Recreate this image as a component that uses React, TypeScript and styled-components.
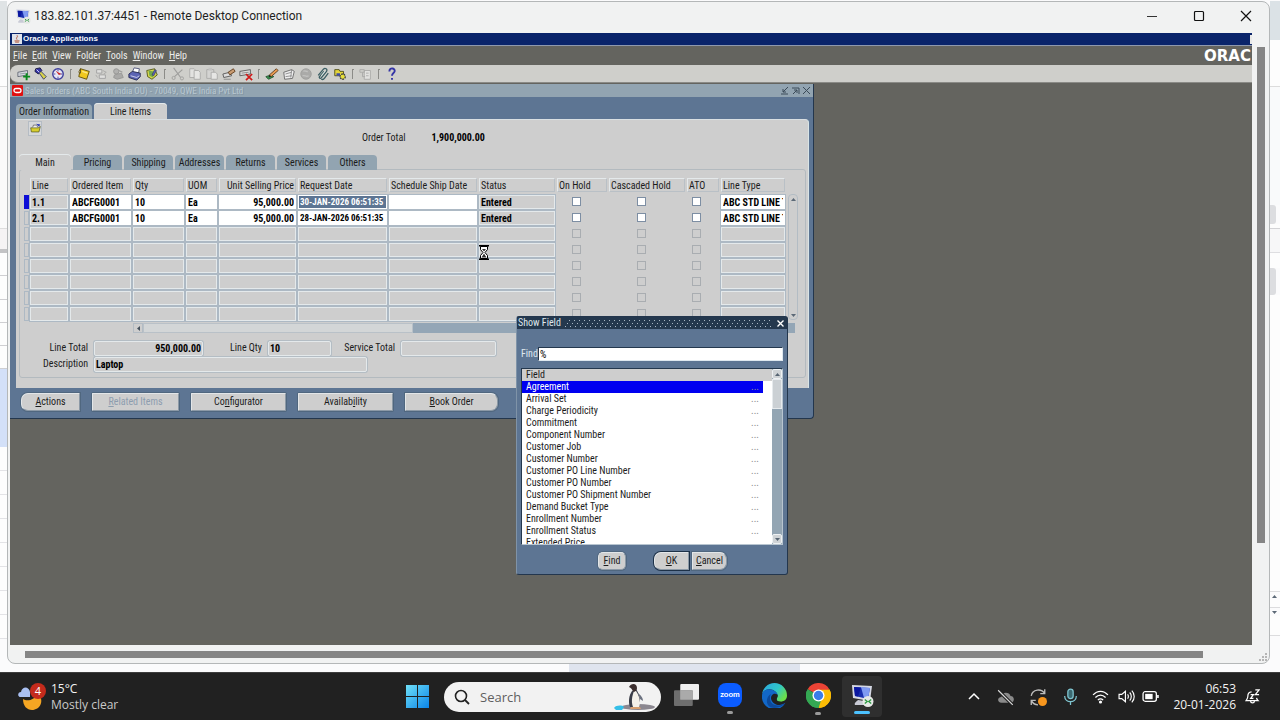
import React from "react";
import styled, { createGlobalStyle, css } from "styled-components";

const formsFont = `"Roboto Condensed", "Open Sans Condensed", "Liberation Sans", Arial, sans-serif`;
const shellFont = `"Open Sans", "Noto Sans", sans-serif`;

const colour = {
  canvas: "#64645f",
  face: "#cecece",
  frame: "#5d7593",
  tab: "#92a4b1",
  line: "#adb9c4",
  light: "#e4e9eb",
  ink: "#1c1c1c",
};

const GlobalStyle = createGlobalStyle`
  * { box-sizing: border-box; }
  body { margin: 0; background: #fbfbfc; font-family: ${shellFont}; }
  button, input { font: inherit; color: inherit; }
  button { padding: 0; border: 0; background: none; }
  input { margin: 0; border-radius: 0; }
  svg { display: block; }
`;

/* ---------- desktop ---------- */

const Screen = styled.div`
  min-height: 100vh;
  display: flex;
  flex-direction: column;
`;

const Desktop = styled.main`
  flex: 1;
  display: grid;
  grid-template-columns: 7px minmax(0, 1fr) 10px;
  grid-template-rows: 1fr 8px;
  padding-top: 1px;
  background: #fbfbfc;
`;

const Strip = styled.div`
  display: flex;
  flex-direction: column;
  overflow: hidden;
`;

const StripPart = styled.div<{ $h: number; $bg?: string; $line?: string }>`
  height: ${(p) => p.$h}px;
  background: ${(p) => p.$bg ?? "#fdfdfd"};
  border-bottom: 1px solid ${(p) => p.$line ?? "transparent"};
`;

const StripThumb = styled.div<{ $h: number }>`
  width: 6px;
  height: ${(p) => p.$h}px;
  border-radius: 0 3px 3px 0;
  background: #dcdde0;
`;

const Under = styled.div`
  grid-column: 1 / -1;
  display: flex;
  justify-content: center;
  padding-left: 88px;
`;

const UnderTint = styled.div`
  width: 231px;
  background: #dfe4ee;
`;

/* ---------- remote desktop window ---------- */

const Rdp = styled.section`
  display: flex;
  flex-direction: column;
  border: 1px solid #b4b7b8;
  border-radius: 8px;
  background: #f1f2f2;
  overflow: hidden;
`;

const RdpTitle = styled.header`
  height: 31px;
  padding: 0 15px 4px 7px;
  display: flex;
  align-items: center;
  gap: 3px;
  line-height: 16px;
  color: #1f1f1f;
`;

const RdpName = styled.h1`
  flex: 1;
  margin: 0;
  font-family: Roboto, sans-serif;
  font-size: 12px;
  font-weight: 400;
`;

const CaptionButtons = styled.div`
  display: flex;
  gap: 31px;
`;

const CaptionButton = styled.button`
  width: 16px;
  height: 16px;
  display: grid;
  place-items: center;
`;

const RdpBody = styled.div`
  flex: 1;
  display: grid;
  grid-template-columns: minmax(0, 1fr) 17px;
  grid-template-rows: minmax(0, 1fr) 18px;
  padding-left: 2px;
`;

const VTrack = styled.div`
  padding: 14px 0 0 5px;
`;

const VThumb = styled.div`
  width: 8px;
  height: 83%;
  background: #858585;
`;

const HTrack = styled.div`
  padding: 6px 0 0 15px;
`;

const HThumb = styled.div`
  width: 96%;
  height: 7px;
  background: #858585;
`;

const Grip = styled.div`
  display: flex;
  align-items: flex-end;
  justify-content: flex-end;
  padding: 2px;
`;

/* ---------- oracle shell ---------- */

const Remote = styled.div`
  display: flex;
  flex-direction: column;
  background: ${colour.canvas};
  font-family: ${formsFont};
  font-size: 10px;
  line-height: 12px;
  color: ${colour.ink};
  overflow: hidden;
`;

const AppTitle = styled.div`
  height: 13px;
  padding-left: 2px;
  display: flex;
  align-items: center;
  gap: 1px;
  background: #0a246a;
  border-bottom: 1px solid #8f99ae;
  font-family: "Liberation Sans", Arial, sans-serif;
  font-size: 8px;
  font-weight: 700;
  line-height: 10px;
  color: #f4f6fb;
`;

const AppTitleText = styled.span`
  flex: 1;
`;

const AppTitleEnd = styled.span`
  width: 2px;
  height: 9px;
  background: #e8e8e8;
`;

const MenuBar = styled.nav`
  height: 19px;
  padding-left: 3px;
  display: flex;
  align-items: center;
  gap: 5px;
  color: #ececea;
`;

const MenuLink = styled.a`
  color: inherit;
  text-decoration: none;
`;

const OracleMark = styled.span`
  width: 48px;
  margin-left: auto;
  overflow: hidden;
  font-family: "DejaVu Sans", sans-serif;
  font-size: 15px;
  font-weight: 700;
  line-height: 16px;
  color: #fff;
`;

const ToolBar = styled.div`
  height: 18px;
  padding-left: 5px;
  display: flex;
  align-items: center;
  background: #cfcfcb;
  border-bottom: 1px solid #8a8a86;
  border-radius: 8px 0 0 8px;
`;

const ToolButton = styled.button<{ $dim?: boolean }>`
  width: 17px;
  height: 16px;
  display: grid;
  place-items: center;
  opacity: ${(p) => (p.$dim ? 0.55 : 1)};
`;

const ToolSep = styled.span`
  width: 2px;
  height: 10px;
  margin: 0 3px 0 4px;
  border-left: 1px solid #8c8c88;
  border-top: 1px solid #8c8c88;
`;

const Canvas = styled.div`
  position: relative;
  flex: 1;
  min-height: 500px;
`;

/* ---------- sales orders window ---------- */

const SalesWindow = styled.section`
  position: absolute;
  left: 0;
  top: 1px;
  width: 804px;
  background: ${colour.frame};
  border-right: 1px solid #23364d;
  border-bottom: 1px solid #23364d;
  border-radius: 0 0 4px 0;
`;

const SalesTitle = styled.header`
  height: 13px;
  padding: 0 2px;
  display: flex;
  align-items: center;
  gap: 2px;
  background: ${colour.tab};
  color: #b9c8d2;
`;

const SalesName = styled.h2`
  flex: 1;
  margin: 0;
  font-size: 9px;
  font-weight: 400;
  line-height: 12px;
  text-shadow: 1px 1px 0 #8496a4;
`;

const TinyButton = styled.button`
  width: 9px;
  height: 9px;
`;

const Tabs = styled.div<{ $inner?: boolean }>`
  display: flex;
  align-items: flex-end;
  gap: 2px;
  ${(p) =>
    p.$inner
      ? css`
          height: 16px;
          margin-bottom: -1px;
          position: relative;
        `
      : css`
          height: 22px;
          padding-left: 6px;
        `}
`;

const Tab = styled.button<{ $w: number; $on?: boolean }>`
  width: ${(p) => p.$w}px;
  height: 15px;
  border-radius: 4px 4px 0 0;
  background: ${(p) => (p.$on ? colour.face : colour.tab)};
  line-height: 15px;
  white-space: nowrap;
  ${(p) =>
    p.$on &&
    css`
      height: 16px;
      box-shadow: inset 0 1px 0 ${colour.light};
    `}
`;

const Panel = styled.div`
  margin: 0 4px 0 6px;
  padding: 0 2px 10px 3px;
  background: ${colour.face};
  border-top: 1px solid #d9dfe2;
  border-right: 1px solid #d9e4e6;
  border-radius: 0 4px 0 0;
`;

const PanelTop = styled.div`
  height: 34px;
  padding: 1px 0 0 9px;
  display: flex;
`;

const FolderButton = styled.button`
  width: 14px;
  height: 15px;
  display: grid;
  place-items: center;
  border: 1px solid #b5bcc4;
  background: #d6d8da;
`;

const OrderTotal = styled.div`
  margin-left: 320px;
  display: flex;
  align-items: center;
  gap: 26px;
`;

const Strong = styled.strong`
  font-weight: 700;
  color: #000;
`;

const Pane = styled.div`
  padding: 8px 0 5px 4px;
  border: 1px solid #b3babf;
  border-radius: 3px;
`;

const GridArea = styled.div`
  display: flex;
  gap: 1px;
`;

const Grid = styled.table`
  width: 763px;
  table-layout: fixed;
  border-collapse: collapse;
  td,
  th {
    padding: 0;
    height: 16px;
    text-align: left;
    font-weight: 400;
    vertical-align: middle;
  }
`;

const Head = styled.div<{ $right?: boolean }>`
  height: 14px;
  margin: 0 2px 2px 0;
  padding: 0 1px;
  border: 1px solid #b9c0c6;
  border-top-color: ${colour.light};
  border-left-color: ${colour.light};
  line-height: 14px;
  white-space: nowrap;
  overflow: hidden;
  text-align: ${(p) => (p.$right ? "right" : "left")};
`;

const Marker = styled.div<{ $on: boolean }>`
  width: 5px;
  height: 14px;
  border: 1px solid ${(p) => (p.$on ? "#0d0dd6" : colour.line)};
  background: ${(p) => (p.$on ? "#0d0dd6" : "transparent")};
`;

const Cell = styled.input<{ $tone: "white" | "grey"; $right?: boolean }>`
  display: block;
  width: calc(100% - 2px);
  height: 14px;
  padding: 0 1px;
  border: 1px solid ${(p) => (p.$tone === "white" ? "#fff" : colour.light)};
  background: ${(p) => (p.$tone === "white" ? "#fff" : colour.face)};
  box-shadow: 0 0 0 1px ${colour.line};
  font-weight: 700;
  line-height: 12px;
  color: #000;
  text-align: ${(p) => (p.$right ? "right" : "left")};
  &:focus {
    outline: none;
  }
`;

const DateCell = styled(Cell)`
  font-size: 9px;
`;

const PickedCell = styled(DateCell)`
  background: ${colour.frame};
  color: #fff;
`;

const Tick = styled.input`
  appearance: none;
  display: block;
  width: 9px;
  height: 9px;
  margin: 0 0 1px 15px;
  border: 1px solid #7d8ea3;
  background: #fff;
  &:disabled {
    border-color: #a9adb1;
    background: transparent;
  }
`;

const TickWide = styled(Tick)`
  margin-left: 28px;
`;

const TickNarrow = styled(Tick)`
  margin-left: 5px;
`;

const SideScroll = styled.div`
  width: 10px;
  margin: 16px 0 2px;
  display: flex;
  flex-direction: column;
  justify-content: space-between;
  border: 1px solid #b3bcc4;
  border-radius: 4px;
`;

const ArrowButton = styled.button`
  width: 8px;
  height: 8px;
  display: grid;
  place-items: center;
  color: #5c6977;
`;

const FootScroll = styled.div`
  height: 10px;
  margin: 1px 10px 7px 109px;
  display: flex;
  background: #94a6b6;
`;

const FootThumb = styled.div`
  width: 270px;
  border: 1px solid #b9c1c8;
  background: #d3d6d7;
`;

const FootArrow = styled.button`
  width: 10px;
  height: 10px;
  display: grid;
  place-items: center;
  background: ${colour.face};
  border: 1px solid #b3bcc4;
  color: #44505c;
`;

const FieldRow = styled.div`
  height: 16px;
  display: flex;
  align-items: center;
  margin-left: -4px;
`;

const FieldLabel = styled.label<{ $w: number }>`
  width: ${(p) => p.$w}px;
  padding-right: 6px;
  text-align: right;
  white-space: nowrap;
`;

const Field = styled.input<{ $w: number; $right?: boolean }>`
  width: ${(p) => p.$w}px;
  height: 15px;
  padding: 0 1px;
  border: 1px solid ${colour.light};
  border-radius: 2px;
  background: ${colour.face};
  box-shadow: 0 0 0 1px #b4bdc4;
  font-weight: 700;
  color: #000;
  text-align: ${(p) => (p.$right ? "right" : "left")};
`;

const ActionRow = styled.footer`
  padding: 5px 0 7px 11px;
  display: flex;
  gap: 12px;
`;

const Push = styled.button<{ $w: number; $round?: "left" | "right" | "both"; $strong?: boolean }>`
  width: ${(p) => p.$w}px;
  height: 18px;
  border: 1px solid #e3e6e8;
  border-right-color: #8c99a6;
  border-bottom-color: #8c99a6;
  border-radius: ${(p) =>
    p.$round === "both" ? "5px" : p.$round === "left" ? "7px 0 0 7px" : p.$round === "right" ? "0 7px 7px 0" : "1px"};
  background: ${colour.face};
  box-shadow: ${(p) => (p.$strong ? "0 0 0 1px #1d3148" : "0 0 0 1px #50677f")};
  line-height: 14px;
  white-space: nowrap;
  color: ${colour.ink};
  &:disabled {
    color: #8d9dae;
  }
`;

/* ---------- show field dialog ---------- */

const Dialog = styled.section`
  position: absolute;
  left: 506px;
  top: 233px;
  width: 272px;
  border: 1px solid #23364d;
  border-left-color: #7f93a8;
  border-radius: 3px;
  background: ${colour.frame};
`;

const DialogTitle = styled.header`
  height: 12px;
  padding: 0 2px 0 1px;
  display: flex;
  align-items: center;
  gap: 4px;
  background: #24384e;
  color: #dfe6ec;
`;

const Stipple = styled.span`
  flex: 1;
  height: 9px;
  overflow: hidden;
`;

const FindRow = styled.div`
  margin-top: 18px;
  padding: 0 4px;
  display: flex;
  align-items: center;
  color: #dfe8ef;
`;

const FindLabel = styled.label`
  width: 17px;
  white-space: nowrap;
`;

const FindBox = styled.input`
  flex: 1;
  min-width: 0;
  height: 14px;
  padding: 0 1px;
  border: 1px solid #24384e;
  border-right-color: #dfe8ef;
  border-bottom-color: #dfe8ef;
  background: #fff;
  color: #000;
`;

const ListFrame = styled.div`
  height: 177px;
  margin: 7px 4px 0;
  display: flex;
  border: 1px solid #24384e;
  border-right-color: #b8c5d0;
  border-bottom-color: #b8c5d0;
  background: #fff;
  overflow: hidden;
`;

const List = styled.table`
  flex: 1;
  align-self: flex-start;
  border-collapse: collapse;
  td,
  th {
    height: 12px;
    padding: 0 0 0 4px;
    font-weight: 400;
    text-align: left;
    line-height: 12px;
  }
`;

const ListHead = styled.tr`
  background: ${colour.face};
`;

const ListRow = styled.tr<{ $on: boolean }>`
  color: ${(p) => (p.$on ? "#fff" : colour.ink)};
  td:not(:last-child) {
    background: ${(p) => (p.$on ? "#0000f0" : "transparent")};
  }
`;

const More = styled.td`
  width: 16px;
  color: #8d8d8d;
`;

const Spare = styled.td`
  width: 9px;
`;

const ListScroll = styled.div`
  width: 10px;
  display: flex;
  flex-direction: column;
  background: #93a5b3;
`;

const ListArrow = styled.button`
  width: 10px;
  height: 10px;
  display: grid;
  place-items: center;
  border: 1px solid #eef1f3;
  border-radius: 2px;
  background: #cfd3d6;
  color: #566472;
`;

const ListThumb = styled.div`
  height: 30px;
  margin-bottom: auto;
  border: 1px solid #e6eaed;
  background: #cbd0d4;
`;

const DialogButtons = styled.footer`
  padding: 7px 0 4px 81px;
  display: flex;
`;

const Gap = styled.span<{ $w: number }>`
  width: ${(p) => p.$w}px;
`;

const Wait = styled.span`
  position: absolute;
  left: 469px;
  top: 162px;
`;

/* ---------- taskbar ---------- */

const Taskbar = styled.footer`
  height: 48px;
  padding: 0 20px 0 18px;
  display: grid;
  grid-template-columns: 1fr auto 1fr;
  align-items: center;
  background: #212121;
  border-top: 1px solid #3d3d3d;
  color: #f3f3f3;
  font-size: 12px;
  line-height: 16px;
`;

const Weather = styled.button`
  display: flex;
  align-items: center;
  gap: 4px;
  text-align: left;
`;

const Muted = styled.div`
  color: #c9c9c9;
`;

const Dock = styled.div`
  padding-left: 10px;
  display: flex;
  align-items: center;
`;

const SearchBox = styled.label`
  width: 217px;
  height: 30px;
  margin: 0 5px 0 15px;
  padding: 0 5px 0 10px;
  display: flex;
  align-items: center;
  gap: 10px;
  border-radius: 15px;
  background: #f2f2f2;
  color: #222;
  overflow: hidden;
`;

const SearchInput = styled.input`
  flex: 1;
  min-width: 0;
  padding: 0;
  border: 0;
  background: none;
  font-size: 13px;
  &::placeholder {
    color: #5f5f5f;
    opacity: 1;
  }
`;

const DockButton = styled.button<{ $on?: boolean }>`
  width: 40px;
  height: 41px;
  margin-right: 4px;
  padding-top: 7px;
  display: flex;
  flex-direction: column;
  align-items: center;
  gap: 4px;
  border-radius: 4px;
  background: ${(p) => (p.$on ? "#2f2f2f" : "transparent")};
  &:last-child {
    margin-right: 0;
  }
`;

const Running = styled.span<{ $on?: boolean }>`
  width: ${(p) => (p.$on ? 16 : 6)}px;
  height: 3px;
  border-radius: 2px;
  background: ${(p) => (p.$on ? "#4cc2ff" : "#9a9a9a")};
`;

const ZoomTile = styled.span`
  width: 24px;
  height: 24px;
  border-radius: 8px;
  background: #0b5cff;
  font-family: Lato, sans-serif;
  font-size: 8px;
  font-weight: 700;
  line-height: 22px;
  text-align: center;
  color: #fff;
`;

const Tray = styled.div`
  display: flex;
  justify-content: flex-end;
  align-items: center;
`;

const TrayButton = styled.button<{ $w: number }>`
  width: ${(p) => p.$w}px;
  height: 24px;
  display: grid;
  place-items: center;
`;

const Clock = styled.time`
  width: 74px;
  margin-right: 9px;
  text-align: right;
`;

/* ---------- drawings ---------- */

const Svg = ({ s = 14, children, box = 16 }: { s?: number; box?: number; children: React.ReactNode }) => (
  <svg width={s} height={s} viewBox={`0 0 ${box} ${box}`} fill="none" aria-hidden="true">
    {children}
  </svg>
);

const MonitorIcon = ({ size }: { size: number }) => (
  <Svg s={size} box={24}>
    <path d="M8 17l6 1 1 4H5c-1-2 1-3 3-5z" fill="#c9cbd6" />
    <path d="M2 2l20 1-2 15L3 15z" fill="#d5d8e4" />
    <path d="M4 4l16 1-2 11L5 13z" fill="#1a2fae" />
    <path d="M11 4l9 1-2 11-4-1z" fill="#7f9af2" />
    <path d="M4 4l7 .4L8 13.6 5 13z" fill="#0a17a0" />
    <circle cx="18" cy="18.500" r="5.500" fill="#e6e8e6" />
    <path d="M14.800 16.500l2.400 2-2.400 2M21.200 16.500l-2.400 2 2.400 2" stroke="#2f9a44" strokeWidth="1.400" />
  </Svg>
);

const tools: Record<string, React.ReactNode> = {
  New: (
    <>
      <path d="M1 6l11-2v5L1 11z" fill="#d8dbe0" stroke="#5d6470" />
      <path d="M3 8l7-1" stroke="#8c94a0" />
      <path d="M11 7v8M7 11h8" stroke="#0a8a1e" strokeWidth="2.200" />
    </>
  ),
  Find: (
    <>
      <path d="M2 2l5-1 2 3-4 4-4-3z" fill="#3636a8" stroke="#14143c" />
      <path d="M6 7l2-2 6 6-3 3z" fill="#d9d24a" stroke="#333a66" />
      <path d="M3 3l3 3" stroke="#e8e8ff" />
    </>
  ),
  Navigator: (
    <>
      <circle cx="8" cy="8" r="6" fill="#e6e6f5" stroke="#3f3f9c" strokeWidth="1.600" />
      <path d="M5 4l4 5 3-1-4-2z" fill="#c22" />
      <path d="M8 3v2M8 11v2M3 8h2M11 8h2" stroke="#3f3f9c" />
    </>
  ),
  Save: (
    <>
      <path d="M4 2l10 3-3 9L2 11z" fill="#f0c81e" stroke="#5a4a08" />
      <path d="M4 2L2 6l2 1z" fill="#fff" stroke="#5a4a08" />
      <path d="M6 5l6 2" stroke="#fbe88a" strokeWidth="1.500" />
    </>
  ),
  "Next Step": (
    <>
      <path d="M3 3h6v4H3zM6 9h7v4H6z" fill="#eee" stroke="#77777a" />
      <path d="M10 4l4 2-3 2M2 9l2 3" stroke="#888" />
    </>
  ),
  "Switch Responsibility": (
    <>
      <circle cx="6" cy="5" r="3" fill="#999" stroke="#666" />
      <path d="M4 9l8-2 2 5-7 2-4-2z" fill="#8c8c8c" stroke="#666" />
      <path d="M9 4l4 2" stroke="#777" strokeWidth="1.500" />
    </>
  ),
  Print: (
    <>
      <path d="M5 6l2-5 6 1-1 5z" fill="#fff" stroke="#4a4f78" />
      <path d="M1 8l4-3 9 2v4l-4 4-9-3z" fill="#5c64b4" stroke="#24284e" />
      <path d="M3 10l7 2 3-2" stroke="#d8daf2" />
    </>
  ),
  "Close Form": (
    <>
      <path d="M2 4l9-2 3 7-6 5-5-3z" fill="#d6d84c" stroke="#4f5318" />
      <path d="M4 4l6 1-1 7-4-2z" fill="#72a84c" />
      <path d="M8 9l3-6 2 1-3 6z" fill="#5b63bd" stroke="#20244a" strokeWidth=".6" />
    </>
  ),
  Cut: (
    <>
      <path d="M3 1l8 11M13 3L4 11" stroke="#777" strokeWidth="1.300" />
      <circle cx="3" cy="12.500" r="1.800" stroke="#777" />
      <circle cx="12.500" cy="13" r="1.800" stroke="#777" />
    </>
  ),
  Copy: (
    <>
      <path d="M2 2h5l2 2v8H2z" fill="#f2f2f2" stroke="#8b8b8b" />
      <path d="M7 4h5l2 2v8H7z" fill="#fafafa" stroke="#8b8b8b" />
    </>
  ),
  Paste: (
    <>
      <path d="M2 3h8v10H2z" fill="#d9d9d9" stroke="#8b8b8b" />
      <path d="M4 1h4v3H4z" fill="#bbb" />
      <path d="M7 6h5l2 2v6H7z" fill="#fafafa" stroke="#8b8b8b" />
    </>
  ),
  "Clear Record": (
    <>
      <path d="M1 8l8-2 2 4-9 2z" fill="#dcdcdc" stroke="#555" />
      <path d="M7 6l6-4 2 3-6 4z" fill="#c99c72" stroke="#5b3a1c" />
      <path d="M2 14h8" stroke="#888" />
    </>
  ),
  Delete: (
    <>
      <path d="M1 5l12-2v5L1 10z" fill="#dcdcdc" stroke="#555" />
      <path d="M3 7l8-1" stroke="#888" />
      <path d="M8 8l7 7M15 8l-7 7" stroke="#d01818" strokeWidth="2" />
    </>
  ),
  "Edit Field": (
    <>
      <path d="M1 11l6-2 3 2-6 3z" fill="#3b9a52" stroke="#1f4e2b" />
      <path d="M5 9l8-7 2 2-8 7z" fill="#e89a50" stroke="#5b3a1c" />
      <path d="M5 9l2 2-3 1z" fill="#222" />
    </>
  ),
  Zoom: (
    <>
      <path d="M2 6l9-3 3 2-2 8-9 1z" fill="#eee" stroke="#666" />
      <path d="M4 8l7-2M4 11l7-1M11 3l-1 9" stroke="#888" />
    </>
  ),
  Translations: (
    <>
      <circle cx="8" cy="8" r="6" fill="#8d8d8d" stroke="#777" />
      <path d="M5 5c2-2 3 1 5 0M4 10c3-1 4 2 7 0" stroke="#b8b8b8" strokeWidth="1.500" />
    </>
  ),
  Attachments: (
    <>
      <path d="M2.500 9.500l6-7c2-2 5 0 3.500 2.500l-6 7.500c-1 1.200-2.800 0-2-1.500l5-6M6 14c2 1 3 0 4-1.500l4-5.500" stroke="#3c5f64" strokeWidth="1.500" />
      <path d="M6 10l4-5" stroke="#e8f6f4" />
    </>
  ),
  "Folder Tools": (
    <>
      <path d="M2 3h5l1 2h4v5H2z" fill="#e3d53c" stroke="#4d4b12" />
      <circle cx="11" cy="11" r="3" fill="#e8e03a" stroke="#33364a" strokeDasharray="2 1" strokeWidth="1.500" />
      <path d="M4 7h4v3H4z" fill="#3e4ba8" />
    </>
  ),
  Workbench: (
    <>
      <path d="M6 4h7v10H6z" fill="#f2f2f2" stroke="#8a8a8a" />
      <path d="M1 3h5v3H1zM4 6v5h3M8 7h3M8 10h3" stroke="#8a8a8a" />
    </>
  ),
  Help: (
    <>
      <path d="M5 5c0-5 7-4 6 0-.4 2-3 2-3 5" stroke="#3434a6" strokeWidth="2.200" />
      <path d="M8 12.500v2.200" stroke="#3434a6" strokeWidth="2.200" />
    </>
  ),
};

const toolGroups: string[][] = [
  ["New", "Find", "Navigator"],
  ["Save", "Next Step", "Switch Responsibility", "Print", "Close Form"],
  ["Cut", "Copy", "Paste", "Clear Record", "Delete"],
  ["Edit Field", "Zoom", "Translations", "Attachments", "Folder Tools"],
  ["Workbench"],
  ["Help"],
];

const dimmed = new Set(["Next Step", "Switch Responsibility", "Cut", "Copy", "Paste", "Translations", "Workbench"]);

const Arrow = ({ d }: { d: "up" | "down" | "left" }) => (
  <svg width="5" height="5" viewBox="0 0 5 5" aria-hidden="true">
    <path
      d={d === "up" ? "M0 4l2.500-3L5 4z" : d === "down" ? "M0 1l2.500 3L5 1z" : "M4 0L1 2.500 4 5z"}
      fill="currentColor"
    />
  </svg>
);

const Dots = () => (
  <svg width="100%" height="9" aria-hidden="true">
    <defs>
      <pattern id="dots" width="5" height="9" patternUnits="userSpaceOnUse">
        <path d="M4 1h1v1H4zM2 4h1v1H2zM0 7h1v1H0z" fill="#a9b7c4" />
      </pattern>
    </defs>
    <rect width="100%" height="9" fill="url(#dots)" />
  </svg>
);

const Penguin = () => (
  <svg width="42" height="28" viewBox="0 0 42 28" aria-hidden="true">
    <ellipse cx="24" cy="24" rx="17" ry="3" fill="#8b8790" />
    <path d="M0 25c2-3 8-3 10-1l-2 3H2z" fill="#35bfe8" />
    <path d="M18 8c-3 4-4 11-2 16h6l4-6c0-5-2-9-4-12z" fill="#3a3d48" />
    <path d="M20 8c-2 5-3 11-1 16h6c2-5 0-12-3-16z" fill="#f4f1ea" />
    <path d="M15 4c2-4 8-4 8 1 0 2-1 3-3 4-2-1-1-3-5-5z" fill="#3c2f2f" />
    <path d="M24 10c2 2 5 4 5 8l-3-2z" fill="#6c7280" />
    <path d="M17 24h9l1 2H16z" fill="#d8a070" />
  </svg>
);

const EdgeIcon = () => (
  <Svg s={25} box={24}>
    <defs>
      <linearGradient id="edgeTop" x1="0" y1="0" x2="1" y2=".6">
        <stop offset="0" stopColor="#2aa6e0" />
        <stop offset=".6" stopColor="#30c6c8" />
        <stop offset="1" stopColor="#6be04a" />
      </linearGradient>
    </defs>
    <path d="M0 12a12 12 0 0124 0c0 4-3 6-6 6s-4-1.500-4-2.500 1-1.500 1-3.500c0-3-4-6-8-6-4 0-7 3-7 6z" fill="url(#edgeTop)" />
    <path d="M0 12c0-4 3-6 7-6 4 0 8 3 8 6-1-1.500-3-2-4-1.500-4 2-3 9 4 10.500 3 .5 5-.5 7.500-2A12 12 0 010 12z" fill="#1268c8" />
    <path d="M8 23.300C3 20 4 13 8.500 10.500 6 16 9 22 16 21.500c2.500 0 4-1 6.500-2.500-3 4-9 6-14.500 4.300z" fill="#0c4a9c" />
    <path d="M15 12c0 2-1 2.500-1 3.500s1 2.500 4 2.500c1.500 0 3-.5 4.200-1.500-2 3-7.200 4.500-10.200 1.500-2-2.200-1.500-5 0-7.300 1.500-.3 2.500.3 3 1.300z" fill="#212121" />
  </Svg>
);

const ChromeIcon = () => (
  <Svg s={25} box={24}>
    <path d="M12 12L1.600 6A12 12 0 0122.400 6z" fill="#ea4335" />
    <path d="M12 12l10.400-6A12 12 0 0112 24z" fill="#fbbc05" />
    <path d="M12 12v12A12 12 0 011.600 6z" fill="#34a853" />
    <path d="M12 6.500h10.600A12 12 0 0112 24l5-9z" fill="#fbbc05" />
    <path d="M12 24A12 12 0 011.600 6l5.600 8.500 7 3z" fill="#34a853" />
    <circle cx="12" cy="12" r="5.800" fill="#fff" />
    <circle cx="12" cy="12" r="4.500" fill="#3b7de9" />
  </Svg>
);

/* ---------- data ---------- */

const columns = [
  { name: "Line", w: 40 },
  { name: "Ordered Item", w: 63 },
  { name: "Qty", w: 53 },
  { name: "UOM", w: 33 },
  { name: "Unit Selling Price", w: 79, right: true },
  { name: "Request Date", w: 91 },
  { name: "Schedule Ship Date", w: 90 },
  { name: "Status", w: 78 },
  { name: "On Hold", w: 52 },
  { name: "Cascaded Hold", w: 78 },
  { name: "ATO", w: 34 },
  { name: "Line Type", w: 66 },
];

const lines = [
  ["1.1", "ABCFG0001", "10", "Ea", "95,000.00", "30-JAN-2026 06:51:35", "", "Entered", "", "", "", "ABC STD LINE TYPE"],
  ["2.1", "ABCFG0001", "10", "Ea", "95,000.00", "28-JAN-2026 06:51:35", "", "Entered", "", "", "", "ABC STD LINE TYPE"],
];

const fields = [
  "Agreement",
  "Arrival Set",
  "Charge Periodicity",
  "Commitment",
  "Component Number",
  "Customer Job",
  "Customer Number",
  "Customer PO Line Number",
  "Customer PO Number",
  "Customer PO Shipment Number",
  "Demand Bucket Type",
  "Enrollment Number",
  "Enrollment Status",
  "Extended Price",
];

const ticks: Record<string, typeof Tick> = { "On Hold": Tick, "Cascaded Hold": TickWide, ATO: TickNarrow };

const GridCell = ({ row, col }: { row: number; col: number }) => {
  const column = columns[col];
  const label = `${column.name}, row ${row + 1}`;
  const filled = row < lines.length;
  const Box = ticks[column.name];
  if (Box) return <Box type="checkbox" aria-label={label} disabled={!filled} />;
  const grey = !filled || column.name === "Line" || column.name === "Status";
  const isDate = column.name === "Request Date";
  const Control = isDate ? (row === 0 ? PickedCell : DateCell) : Cell;
  return (
    <Control
      aria-label={label}
      defaultValue={filled ? lines[row][col] : ""}
      $tone={grey ? "grey" : "white"}
      $right={column.right}
    />
  );
};

/* ---------- page ---------- */

const SalesOrders = () => (
  <SalesWindow>
    <SalesTitle>
      <svg width="11" height="11" viewBox="0 0 11 11" aria-hidden="true">
        <rect width="11" height="11" rx="1" fill="#e01010" />
        <rect x="2" y="3.500" width="7" height="4" rx="2" fill="none" stroke="#fff" strokeWidth="1.300" />
      </svg>
      <SalesName>Sales Orders (ABC South India OU) - 70049, QWE India Pvt Ltd</SalesName>
      {["M8 1L3 6M3 3v3h3M1 8h7", "M1 2h7v6M6 4L2 8M3 4h3v3", "M1 1l7 7M8 1L1 8"].map((d, i) => (
        <TinyButton key={d} aria-label={["Minimise", "Maximise", "Close"][i]}>
          <Svg s={9} box={9}>
            <path d={d} stroke="#3b4a58" />
          </Svg>
        </TinyButton>
      ))}
    </SalesTitle>
    <Tabs>
      <Tab $w={76}>Order Information</Tab>
      <Tab $w={73} $on>
        Line Items
      </Tab>
    </Tabs>
    <Panel>
      <PanelTop>
        <FolderButton aria-label="Open folder">
          <Svg s={11}>
            <path d="M1 7h11l3-2-2 8H2z" fill="#d8cf2e" stroke="#4f5120" />
            <path d="M4 6l1-3h5l1 3" fill="#eee" stroke="#555" />
            <path d="M9 1l6 1-2 3z" fill="#2433b8" />
          </Svg>
        </FolderButton>
        <OrderTotal>
          <span>Order Total</span>
          <Strong>1,900,000.00</Strong>
        </OrderTotal>
      </PanelTop>
      <Tabs $inner>
        {["Main", "Pricing", "Shipping", "Addresses", "Returns", "Services", "Others"].map((name, i) => (
          <Tab key={name} $w={i === 0 ? 52 : 49} $on={i === 0}>
            {name}
          </Tab>
        ))}
      </Tabs>
      <Pane>
        <GridArea>
          <Grid>
            <colgroup>
              <col style={{ width: 6 }} />
              {columns.map((c) => (
                <col key={c.name} style={{ width: c.w }} />
              ))}
            </colgroup>
            <thead>
              <tr>
                <td />
                {columns.map((c) => (
                  <th key={c.name} scope="col">
                    <Head $right={c.right}>{c.name}</Head>
                  </th>
                ))}
              </tr>
            </thead>
            <tbody>
              {Array.from({ length: 8 }, (_, row) => (
                <tr key={row}>
                  <td>
                    <Marker $on={row === 0} />
                  </td>
                  {columns.map((c, col) => (
                    <td key={c.name}>
                      <GridCell row={row} col={col} />
                    </td>
                  ))}
                </tr>
              ))}
            </tbody>
          </Grid>
          <SideScroll>
            <ArrowButton aria-label="Scroll lines up">
              <Arrow d="up" />
            </ArrowButton>
            <ArrowButton aria-label="Scroll lines down">
              <Arrow d="down" />
            </ArrowButton>
          </SideScroll>
        </GridArea>
        <FootScroll>
          <FootArrow aria-label="Scroll columns left">
            <Arrow d="left" />
          </FootArrow>
          <FootThumb />
        </FootScroll>
        <FieldRow>
          <FieldLabel $w={74} htmlFor="line-total">
            Line Total
          </FieldLabel>
          <Field id="line-total" $w={109} $right defaultValue="950,000.00" />
          <FieldLabel $w={65} htmlFor="line-qty">
            Line Qty
          </FieldLabel>
          <Field id="line-qty" $w={63} defaultValue="10" />
          <FieldLabel $w={70} htmlFor="service-total">
            Service Total
          </FieldLabel>
          <Field id="service-total" $w={95} />
        </FieldRow>
        <FieldRow>
          <FieldLabel $w={74} htmlFor="description">
            Description
          </FieldLabel>
          <Field id="description" $w={273} defaultValue="Laptop" />
        </FieldRow>
      </Pane>
    </Panel>
    <ActionRow>
      <Push $w={59} $round="left">
        <u>A</u>ctions
      </Push>
      <Push $w={87} disabled>
        <u>R</u>elated Items
      </Push>
      <Push $w={95}>
        Co<u>n</u>figurator
      </Push>
      <Push $w={95}>
        Availab<u>i</u>lity
      </Push>
      <Push $w={93} $round="right">
        <u>B</u>ook Order
      </Push>
    </ActionRow>
  </SalesWindow>
);

const ShowField = () => (
  <Dialog role="dialog" aria-label="Show Field">
    <DialogTitle>
      <span>Show Field</span>
      <Stipple>
        <Dots />
      </Stipple>
      <TinyButton aria-label="Close dialog">
        <Svg s={9} box={9}>
          <path d="M1.500 1.500l6 6M7.500 1.500l-6 6" stroke="#fff" strokeWidth="1.400" />
        </Svg>
      </TinyButton>
    </DialogTitle>
    <FindRow>
      <FindLabel htmlFor="find">Find</FindLabel>
      <FindBox id="find" defaultValue="%" />
    </FindRow>
    <ListFrame>
      <List>
        <thead>
          <ListHead>
            <th scope="col" colSpan={3}>
              Field
            </th>
          </ListHead>
        </thead>
        <tbody>
          {fields.map((name, i) => (
            <ListRow key={name} $on={i === 0}>
              <td>{name}</td>
              <More>{i < fields.length - 1 ? "..." : ""}</More>
              <Spare />
            </ListRow>
          ))}
        </tbody>
      </List>
      <ListScroll>
        <ListArrow aria-label="Scroll fields up">
          <Arrow d="up" />
        </ListArrow>
        <ListThumb />
        <ListArrow aria-label="Scroll fields down">
          <Arrow d="down" />
        </ListArrow>
      </ListScroll>
    </ListFrame>
    <DialogButtons>
      <Push $w={28} $round="both">
        <u>F</u>ind
      </Push>
      <Gap $w={28} />
      <Push $w={35} $round="left" $strong>
        <u>O</u>K
      </Push>
      <Gap $w={3} />
      <Push $w={35} $round="right">
        <u>C</u>ancel
      </Push>
    </DialogButtons>
  </Dialog>
);

export default function App() {
  return (
    <Screen>
      <GlobalStyle />
      <Desktop>
        <Strip>
          <StripPart $h={39} $bg="#dfe3e5" />
          <StripPart $h={47} $bg="#fdfdfd" $line="#dcdcdc" />
          <StripPart $h={142} $bg="#fafafa" $line="#dedede" />
          <StripPart $h={20} $bg="#f5f3f4" />
          <StripPart $h={4} $bg="#c3c3c5" />
          <StripPart $h={23} $line="#cfcfd2" />
          <StripPart $h={24} $line="#cfcfd2" />
          <StripPart $h={23} $line="#cfcfd2" />
          <StripPart $h={23} $line="#cfcfd2" />
          <StripPart $h={23} $line="#cfcfd2" />
          <StripPart $h={78} $bg="#d3e0f8" />
          {[0, 1, 2, 3, 4, 5, 6, 7].map((n) => (
            <StripPart key={n} $h={24} $line="#e3e3e6" />
          ))}
        </Strip>
        <Rdp>
          <RdpTitle>
            <MonitorIcon size={16} />
            <RdpName>183.82.101.37:4451 - Remote Desktop Connection</RdpName>
            <CaptionButtons>
              <CaptionButton aria-label="Minimise window">
                <Svg s={12} box={12}>
                  <path d="M1 6.500h10" stroke="#333" />
                </Svg>
              </CaptionButton>
              <CaptionButton aria-label="Maximise window">
                <Svg s={12} box={12}>
                  <rect x="1.500" y="1.500" width="9" height="9" rx="1" stroke="#111" strokeWidth="1.200" />
                </Svg>
              </CaptionButton>
              <CaptionButton aria-label="Close window">
                <Svg s={12} box={12}>
                  <path d="M1 1l10 10M11 1L1 11" stroke="#111" strokeWidth="1.200" />
                </Svg>
              </CaptionButton>
            </CaptionButtons>
          </RdpTitle>
          <RdpBody>
            <Remote>
              <AppTitle>
                <Svg s={10}>
                  <rect width="16" height="16" fill="#dfe3ea" />
                  <path d="M8 2c3 2-3 4 0 7M4 11h8M5 13h6" stroke="#b4573a" strokeWidth="1.500" />
                </Svg>
                <AppTitleText>Oracle Applications</AppTitleText>
                <AppTitleEnd />
              </AppTitle>
              <MenuBar>
                {[
                  ["", "F", "ile"],
                  ["", "E", "dit"],
                  ["", "V", "iew"],
                  ["Fo", "l", "der"],
                  ["", "T", "ools"],
                  ["", "W", "indow"],
                  ["", "H", "elp"],
                ].map(([a, b, c]) => (
                  <MenuLink key={a + b + c} href="#">
                    {a}
                    <u>{b}</u>
                    {c}
                  </MenuLink>
                ))}
                <OracleMark>ORAC</OracleMark>
              </MenuBar>
              <ToolBar>
                {toolGroups.map((group, i) => (
                  <React.Fragment key={group[0]}>
                    {i > 0 && <ToolSep />}
                    {group.map((name) => (
                      <ToolButton key={name} aria-label={name} $dim={dimmed.has(name)}>
                        <Svg s={14}>{tools[name]}</Svg>
                      </ToolButton>
                    ))}
                  </React.Fragment>
                ))}
              </ToolBar>
              <Canvas>
                <SalesOrders />
                <Wait>
                  <svg width="10" height="15" viewBox="0 0 10 15" aria-hidden="true">
                    <path d="M1.500 1.500h7v3L6 7.500l2.500 3v3h-7v-3l2.500-3-2.500-3z" fill="#fff" stroke="#000" />
                    <path d="M0 .8h10M0 14.200h10" stroke="#000" strokeWidth="1.500" />
                    <path d="M3 4h4L5 6.500zM5 8.500l2.500 4h-5z" fill="#333" />
                  </svg>
                </Wait>
                <ShowField />
              </Canvas>
            </Remote>
            <VTrack>
              <VThumb />
            </VTrack>
            <HTrack>
              <HThumb />
            </HTrack>
            <Grip>
              <Svg s={8} box={8}>
                <path d="M6 0h2v2H6zM3 3h2v2H3zM6 3h2v2H6zM0 6h2v2H0zM3 6h2v2H3zM6 6h2v2H6z" fill="#b5b5b5" />
              </Svg>
            </Grip>
          </RdpBody>
        </Rdp>
        <Strip>
          <StripPart $h={39} $bg="#dbe2e6" />
          <StripPart $h={47} $line="#dcdcdc" />
          <StripPart $h={118} $bg="#f9fafb" />
          <StripThumb $h={19} />
          <StripPart $h={5} $line="#d3d3d6" />
          <StripPart $h={24} $bg="#f7f7f8" $line="#dedee1" />
          <StripPart $h={15} />
          <StripThumb $h={27} />
          <StripPart $h={297} $line="#dcdcde" />
          <ArrowButton aria-label="Scroll up">
            <Arrow d="up" />
          </ArrowButton>
          <StripPart $h={8} $line="#dcdcde" />
          <ArrowButton aria-label="Scroll down">
            <Arrow d="down" />
          </ArrowButton>
          <StripPart $h={20} $line="#dcdcde" />
        </Strip>
        <Under>
          <UnderTint />
        </Under>
      </Desktop>
      <Taskbar>
        <Weather>
          <svg width="29" height="30" viewBox="0 0 29 30" aria-hidden="true">
            <path d="M5 17c4 3 12 1 15-6 7 8 2 17-6 17-5 0-9-4-9-11z" fill="#f5a623" />
            <path d="M2 15c-3-1-2-5 1-5 1-6 8-6 9 0v5z" fill="#a9c0f2" />
            <circle cx="20" cy="9" r="8" fill="#c42b1c" />
            <text x="20" y="13" textAnchor="middle" fontSize="11" fontFamily="Open Sans, sans-serif" fill="#fff">
              4
            </text>
          </svg>
          <div>
            <div>15°C</div>
            <Muted>Mostly clear</Muted>
          </div>
        </Weather>
        <Dock>
          <button aria-label="Start">
            <Svg s={23} box={23}>
              <defs>
                <linearGradient id="start" x1="0" y1="0" x2="1" y2="1">
                  <stop offset="0" stopColor="#6fe0f8" />
                  <stop offset="1" stopColor="#0a84e8" />
                </linearGradient>
              </defs>
              <path d="M0 0h11v11H0zM12 0h11v11H12zM0 12h11v11H0zM12 12h11v11H12z" fill="url(#start)" />
            </Svg>
          </button>
          <SearchBox>
            <Svg s={16}>
              <circle cx="7" cy="7" r="5.500" stroke="#222" strokeWidth="1.600" />
              <path d="M11 11l4 4" stroke="#222" strokeWidth="1.800" />
            </Svg>
            <SearchInput aria-label="Search" placeholder="Search" />
            <Penguin />
          </SearchBox>
          <DockButton aria-label="Task view">
            <Svg s={25} box={24}>
              <rect x="6" y="1" width="18" height="15" rx="1" fill="#eee" />
              <rect x="0" y="7" width="18" height="15" rx="1" fill="#777" fillOpacity=".9" />
              <rect x="6" y="7" width="12" height="9" fill="#aaa" />
            </Svg>
          </DockButton>
          <DockButton>
            <ZoomTile>zoom</ZoomTile>
            <Running />
          </DockButton>
          <DockButton aria-label="Edge">
            <EdgeIcon />
          </DockButton>
          <DockButton aria-label="Chrome">
            <ChromeIcon />
            <Running />
          </DockButton>
          <DockButton aria-label="Remote Desktop" $on>
            <MonitorIcon size={24} />
            <Running $on />
          </DockButton>
        </Dock>
        <Tray>
          <TrayButton $w={32} aria-label="Show hidden icons">
            <Svg s={12} box={12}>
              <path d="M1 8l5-5 5 5" stroke="#fff" strokeWidth="1.500" />
            </Svg>
          </TrayButton>
          <TrayButton $w={32} aria-label="Cloud sync off">
            <Svg s={18}>
              <path d="M4 13c-4 0-4-5 0-5 0-5 7-5 8-1 4 0 4 6 0 6z" fill="#8b8b8b" />
              <path d="M1 2l13 13" stroke="#212121" strokeWidth="3" />
              <path d="M1 2l13 13" stroke="#ddd" strokeWidth="1" />
            </Svg>
          </TrayButton>
          <TrayButton $w={32} aria-label="Updates">
            <Svg s={18}>
              <path d="M2 7c1-6 9-7 12-2M14 1v4h-4M2 15v-4h4M2 11c1 2 3 4 6 4" stroke="#bdbdbd" strokeWidth="1.200" />
              <circle cx="12" cy="12" r="4" fill="#f7961e" />
            </Svg>
          </TrayButton>
          <TrayButton $w={32} aria-label="Microphone">
            <Svg s={17}>
              <rect x="5.500" y="1" width="5" height="9" rx="2.500" stroke="#7fc4cf" fill="#3b6a72" strokeWidth="1.200" />
              <path d="M2.500 7.500c0 7 11 7 11 0M8 13v3" stroke="#7fc4cf" strokeWidth="1.200" />
            </Svg>
          </TrayButton>
          <TrayButton $w={28} aria-label="Wi-Fi">
            <Svg s={17}>
              <path d="M1 6.500c4-4.500 10-4.500 14 0M3.200 9c3-3 6.600-3 9.600 0M5.500 11.400c1.500-1.600 3.500-1.600 5 0" stroke="#fff" strokeWidth="1.200" />
              <circle cx="8" cy="13.200" r="1.500" fill="#fff" />
            </Svg>
          </TrayButton>
          <TrayButton $w={24} aria-label="Volume">
            <Svg s={17}>
              <path d="M1 6h2.500L7 3v10l-3.500-3H1z" stroke="#fff" strokeWidth="1.100" />
              <path d="M9 6c1 1 1 3 0 4M11 4.200c2 2 2 5.600 0 7.600M13 2.500c3 3 3 8 0 11" stroke="#fff" strokeWidth="1.100" />
            </Svg>
          </TrayButton>
          <TrayButton $w={24} aria-label="Battery">
            <Svg s={17}>
              <rect x="1" y="3.500" width="12.500" height="9" rx="2" stroke="#fff" strokeWidth="1.200" />
              <rect x="3" y="5.500" width="7" height="5" fill="#fff" />
              <path d="M15 6.500v3" stroke="#fff" strokeWidth="1.500" />
            </Svg>
          </TrayButton>
          <Clock>
            06:53
            <br />
            20-01-2026
          </Clock>
          <TrayButton $w={15} aria-label="Notifications">
            <Svg s={15}>
              <path d="M7 3C4 3 3 5 3 8c0 2-1 3-2 4.500h13c-1-1-1.500-2-1.700-3M6 13c0 2.500 4 2.500 4 0" stroke="#fff" strokeWidth="1.300" />
              <path d="M6 6h3L6 10h3M11 1h4l-4 5h4" stroke="#fff" strokeWidth="1.300" />
            </Svg>
          </TrayButton>
        </Tray>
      </Taskbar>
    </Screen>
  );
}
